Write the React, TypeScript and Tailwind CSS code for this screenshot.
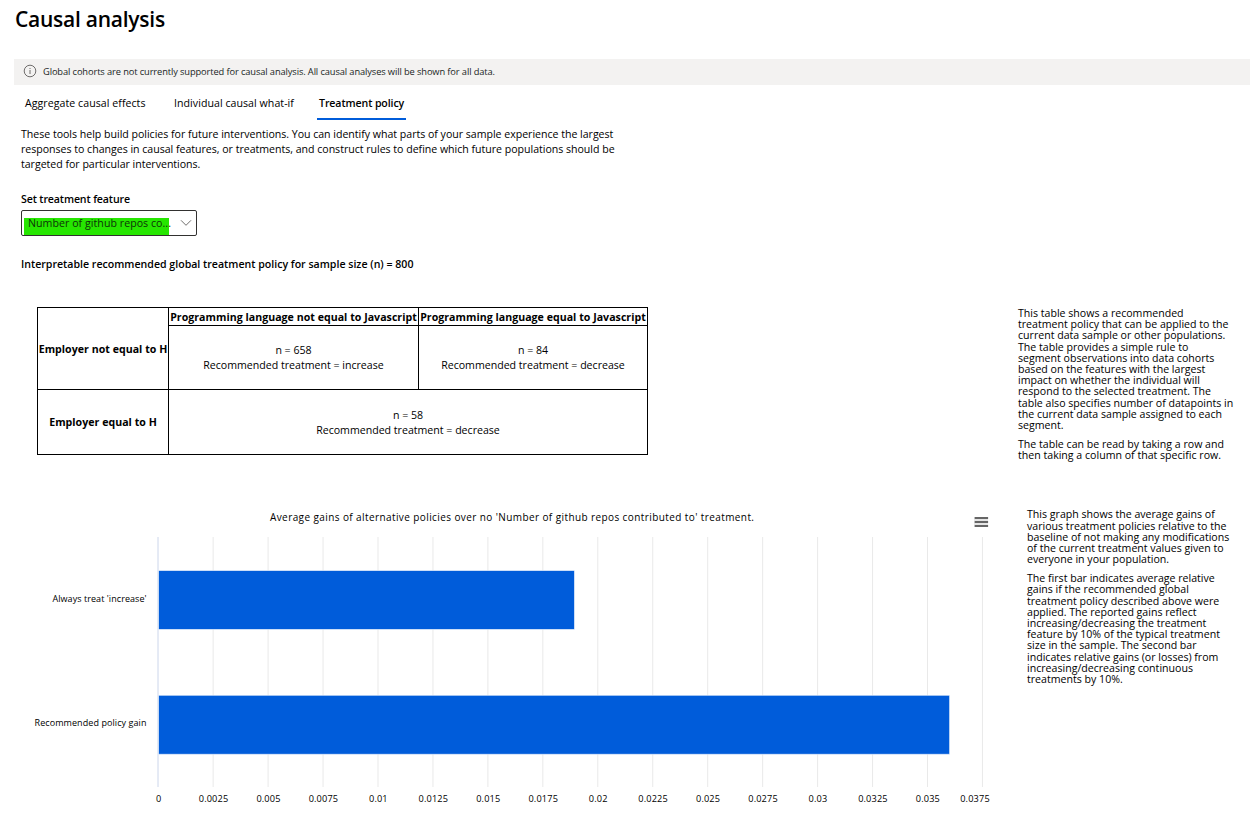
import type { ReactNode } from "react";

const TICKS = ["0", "0.0025", "0.005", "0.0075", "0.01", "0.0125", "0.015", "0.0175", "0.02", "0.0225", "0.025", "0.0275", "0.03", "0.0325", "0.035", "0.0375"];
const STEP = 54.95;
const AXIS_X = 158.2;

const BARS = [
  { label: "Always treat 'increase'", y: 70.5, end: 574.5, labelX: 52.5, labelY: 101.5, labelWidth: 94 },
  { label: "Recommended policy gain", y: 195.3, end: 949.6, labelX: 34.5, labelY: 226, labelWidth: 112 },
];

const TABLE_NOTES = [
  [
    "This table shows a recommended",
    "treatment policy that can be applied to the",
    "current data sample or other populations.",
    "The table provides a simple rule to",
    "segment observations into data cohorts",
    "based on the features with the largest",
    "impact on whether the individual will",
    "respond to the selected treatment. The",
    "table also specifies number of datapoints in",
    "the current data sample assigned to each",
    "segment.",
  ],
  ["The table can be read by taking a row and", "then taking a column of that specific row."],
];

const CHART_NOTES = [
  [
    "This graph shows the average gains of",
    "various treatment policies relative to the",
    "baseline of not making any modifications",
    "of the current treatment values given to",
    "everyone in your population.",
  ],
  [
    "The first bar indicates average relative",
    "gains if the recommended global",
    "treatment policy described above were",
    "applied. The reported gains reflect",
    "increasing/decreasing the treatment",
    "feature by 10% of the typical treatment",
    "size in the sample. The second bar",
    "indicates relative gains (or losses) from",
    "increasing/decreasing continuous",
    "treatments by 10%.",
  ],
];

function Notes({ paragraphs }: { paragraphs: string[][] }) {
  return (
    <div className="flex flex-col gap-[7.8px] whitespace-nowrap leading-[11.2px]">
      {paragraphs.map((lines) => (
        <p key={lines[0]}>
          {lines.map((line) => (
            <span key={line} className="block">
              {line}
            </span>
          ))}
        </p>
      ))}
    </div>
  );
}

function Outcome({ n, action }: { n: number; action: string }) {
  return (
    <div className="leading-[15px]">
      <p>n = {n}</p>
      <p>Recommended treatment = {action}</p>
    </div>
  );
}

function Cell({ className = "", children }: { className?: string; children: ReactNode }) {
  return <div className={`flex items-center justify-center whitespace-nowrap border-b border-r border-black text-center ${className}`}>{children}</div>;
}

function PolicyTable() {
  return (
    <div className="grid w-[611px] grid-cols-[131px_250px_229px] grid-rows-[18px_64px_65px] border-l border-t border-black">
      <Cell className="row-span-2 pt-0.5 font-bold tracking-[0.03px]">Employer not equal to H</Cell>
      <Cell className="pt-0.5 font-bold tracking-[0.03px]">Programming language not equal to Javascript</Cell>
      <Cell className="pt-0.5 font-bold tracking-[0.03px]">Programming language equal to Javascript</Cell>
      <Cell>
        <Outcome n={658} action="increase" />
      </Cell>
      <Cell>
        <Outcome n={84} action="decrease" />
      </Cell>
      <Cell className="font-bold tracking-[0.03px]">Employer equal to H</Cell>
      <Cell className="col-span-2 pt-0.5">
        <Outcome n={58} action="decrease" />
      </Cell>
    </div>
  );
}

function GainsChart() {
  return (
    <svg width="1010" height="314" viewBox="0 0 1010 314" className="shrink-0">
      <text x="270" y="21" textLength="484" fontSize="10">
        Average gains of alternative policies over no 'Number of github repos contributed to' treatment.
      </text>
      {TICKS.map((tick, i) =>
        i === 0 ? null : <line key={tick} x1={AXIS_X + i * STEP} x2={AXIS_X + i * STEP} y1="37" y2="287" stroke="#e9e9e9" />,
      )}
      <line x1="158" x2="158" y1="37" y2="287" stroke="#ccd6eb" />
      {BARS.map((bar) => (
        <g key={bar.label}>
          <rect x="158.5" y={bar.y} width={bar.end - 158.5} height="59" fill="#005cda" stroke="#fff" strokeOpacity="0.6" strokeWidth="1" />
          <text x={bar.labelX} y={bar.labelY} textLength={bar.labelWidth} fontSize="9">
            {bar.label}
          </text>
        </g>
      ))}
      {TICKS.map((tick, i) => (
        <text key={tick} x={i === 15 ? 975 : AXIS_X + i * STEP + 0.4} y="302" textAnchor="middle" fontSize="9.2" letterSpacing="0.15">
          {tick}
        </text>
      ))}
      <rect x="974" y="17" width="14" height="10" fill="#e6e6e6" />
      <path d="M974.7 18h13.4M974.7 22h13.4M974.7 26h13.4" stroke="#666" strokeWidth="2" />
    </svg>
  );
}

export default function App() {
  return (
    <div className="flex h-[814px] w-[1250px] flex-col overflow-hidden bg-white font-['Open_Sans',sans-serif] text-[10.6px] leading-[15px] text-black">
      <header className="flex h-[59px] shrink-0 pl-[15px] pt-1">
        <h1 className="h-[30px] text-[21px] font-semibold leading-[30px] tracking-[-0.25px]">Causal analysis</h1>
      </header>

      <div className="ml-3.5 flex h-[26px] shrink-0 items-center bg-[#f3f2f1] pb-0.5 pl-[9px] text-[9.3px] tracking-[-0.11px] text-[#201f1e]">
        <svg width="14" height="14" viewBox="0 0 14 14" className="mr-[6px]" fill="none" stroke="#605e5c">
          <circle cx="7" cy="7" r="5.8" strokeWidth="0.9" />
          <path d="M7 6v4M7 4v1" strokeWidth="0.9" />
        </svg>
        Global cohorts are not currently supported for causal analysis. All causal analyses will be shown for all data.
      </div>

      <nav className="flex h-[35px] shrink-0 whitespace-nowrap pl-[25px] leading-[37px]">
        <span className="w-[149px] tracking-[0.05px]">Aggregate causal effects</span>
        <span className="w-[143px] tracking-[0.05px]">Individual causal what-if</span>
        <span className="w-[89px] border-b-2 border-[#005cda] pl-0.5 font-semibold tracking-[-0.1px]">Treatment policy</span>
      </nav>

      <div className="flex h-[187px] shrink-0 flex-col pl-[21px] pt-[7px]">
        <p className="whitespace-nowrap tracking-[-0.02px]">
          These tools help build policies for future interventions. You can identify what parts of your sample experience the largest
          <br />
          responses to changes in causal features, or treatments, and construct rules to define which future populations should be
          <br />
          targeted for particular interventions.
        </p>
        <p className="mt-5 font-semibold tracking-[-0.13px]">Set treatment feature</p>
        <div className="mt-[3px] flex h-[26px] w-[176px] shrink-0 items-center justify-between rounded-[2px] border border-[#323130] pl-[2px] pr-[4px]">
          <div className="mt-[7px] h-[17px] w-[145px] whitespace-nowrap bg-[#26e600] pl-1">
            <span className="block -translate-y-[3px] leading-[17px] tracking-[0.05px] text-[#0d3308]">Number of github repos co...</span>
          </div>
          <svg width="12" height="8" viewBox="0 0 12 8" fill="none" stroke="#605e5c" strokeWidth="0.9">
            <path d="M1 1.3l5 5 5-5" />
          </svg>
        </div>
        <p className="mt-[21px] font-semibold">Interpretable recommended global treatment policy for sample size (n) = 800</p>
      </div>

      <section className="flex h-[193px] shrink-0 pl-[37px]">
        <div className="w-[981px]">
          <PolicyTable />
        </div>
        <div className="pt-px">
          <Notes paragraphs={TABLE_NOTES} />
        </div>
      </section>

      <section className="flex h-[314px] shrink-0">
        <GainsChart />
        <div className="pl-[17px] pt-[9.4px]">
          <Notes paragraphs={CHART_NOTES} />
        </div>
      </section>
    </div>
  );
}
